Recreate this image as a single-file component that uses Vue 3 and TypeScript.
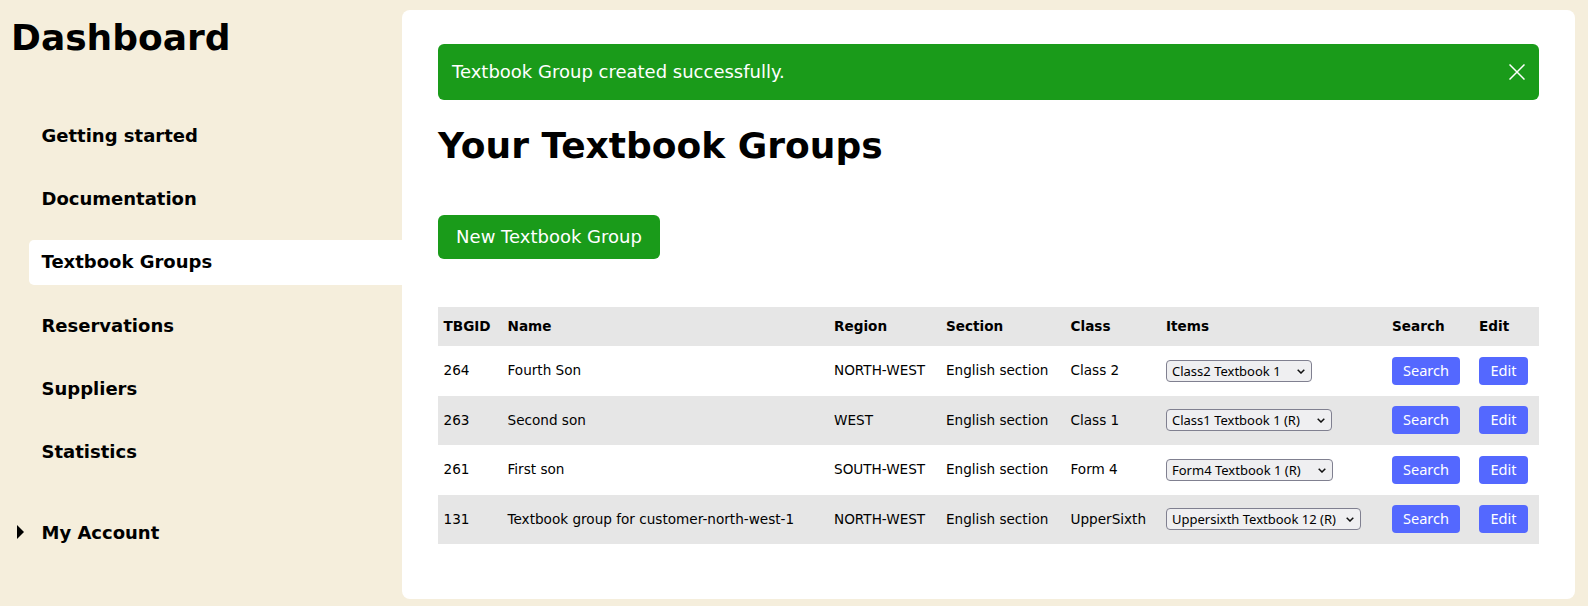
<script setup lang="ts">
interface Row { id: number; name: string; region: string; section: string; cls: string; item: string; selectWidth: number }
const rows: Row[] = [
  { id: 264, name: 'Fourth Son', region: 'NORTH-WEST', section: 'English section', cls: 'Class 2', item: 'Class2 Textbook 1', selectWidth: 146 },
  { id: 263, name: 'Second son', region: 'WEST', section: 'English section', cls: 'Class 1', item: 'Class1 Textbook 1 (R)', selectWidth: 166 },
  { id: 261, name: 'First son', region: 'SOUTH-WEST', section: 'English section', cls: 'Form 4', item: 'Form4 Textbook 1 (R)', selectWidth: 167 },
  { id: 131, name: 'Textbook group for customer-north-west-1', region: 'NORTH-WEST', section: 'English section', cls: 'UpperSixth', item: 'Uppersixth Textbook 12 (R)', selectWidth: 195 },
]
const nav = ['Getting started', 'Documentation', 'Textbook Groups', 'Reservations', 'Suppliers', 'Statistics']
</script>

<template>
  <div class="page">
    <aside class="sidebar">
      <h1 class="brand">Dashboard</h1>
      <nav class="nav">
        <a v-for="n in nav" :key="n" class="nav-item" :class="{ active: n === 'Textbook Groups' }" href="#">{{ n }}</a>
      </nav>
      <div class="account"><span class="tri"></span><span>My Account</span></div>
    </aside>
    <main class="panel">
      <div class="notice">
        <span class="notice-text">Textbook Group created successfully.</span>
        <svg class="close" width="16" height="16" viewBox="0 0 16 16" fill="none" stroke="#fff" stroke-width="1.5">
          <path d="M0.5 0.5 15.5 15.5M15.5 0.5 0.5 15.5" />
        </svg>
      </div>
      <h2 class="title">Your Textbook Groups</h2>
      <button class="new-btn">New Textbook Group</button>
      <table class="table">
        <colgroup>
          <col class="c1" /><col class="c2" /><col class="c3" /><col class="c4" />
          <col class="c5" /><col class="c6" /><col class="c7" /><col class="c8" />
        </colgroup>
        <thead>
          <tr><th>TBGID</th><th>Name</th><th>Region</th><th>Section</th><th>Class</th><th>Items</th><th>Search</th><th>Edit</th></tr>
        </thead>
        <tbody>
          <tr v-for="r in rows" :key="r.id">
            <td>{{ r.id }}</td>
            <td>{{ r.name }}</td>
            <td>{{ r.region }}</td>
            <td>{{ r.section }}</td>
            <td>{{ r.cls }}</td>
            <td class="ctrl">
              <span class="sel-wrap" :style="{ width: r.selectWidth + 'px' }">
                <select class="sel"><option>{{ r.item }}</option></select>
                <svg class="chev" width="8" height="5" viewBox="0 0 8 5" fill="none" stroke="#111" stroke-width="1.5">
                  <path d="M0.7 0.7 4 4 7.3 0.7" />
                </svg>
              </span>
            </td>
            <td class="ctrl"><button class="act search">Search</button></td>
            <td class="ctrl"><button class="act edit">Edit</button></td>
          </tr>
        </tbody>
      </table>
    </main>
  </div>
</template>

<style>
html, body { margin: 0; background: #f5eedc; }
</style>

<style scoped>
.page {
  display: flex;
  height: 606px;
  box-sizing: border-box;
  padding: 10px 13px 7px 0;
  background: #f5eedc;
  font-family: "DejaVu Sans", sans-serif;
  color: #000;
}
.sidebar { width: 402px; flex: none; display: flex; flex-direction: column; }
.brand { margin: 6px 0 0 11px; font-size: 36px; line-height: 44px; font-weight: 700; }
.nav { display: flex; flex-direction: column; gap: 18.35px; margin: 53.5px 0 0 29px; }
.nav-item {
  display: block;
  height: 45px;
  line-height: 44px;
  padding-left: 12.5px;
  font-size: 18px;
  font-weight: 700;
  color: #000;
  text-decoration: none;
  border-radius: 5px 0 0 5px;
}
.nav-item.active { background: #fff; }
.account { display: flex; align-items: center; margin: 34.75px 0 0 17px; font-size: 18px; font-weight: 700; line-height: 45px; }
.tri { width: 0; height: 0; border-left: 7px solid #000; border-top: 7px solid transparent; border-bottom: 7px solid transparent; margin-right: 17.5px; }
.panel {
  flex: 1;
  background: #fff;
  border-radius: 8px;
  padding: 34px 36px 0;
  box-sizing: border-box;
}
.notice {
  display: flex;
  align-items: center;
  justify-content: space-between;
  height: 56px;
  box-sizing: border-box;
  padding: 0 14px;
  border-radius: 6px;
  background: #1a9b1a;
  color: #fff;
  font-size: 18px;
}
.notice-text { margin-bottom: 2px; }
.title { margin: 24px 0 0; font-size: 36px; line-height: 44px; font-weight: 700; }
.new-btn {
  display: block;
  margin-top: 47px;
  height: 44px;
  width: 222px;
  padding: 0 0 2px;
  border: 0;
  border-radius: 6px;
  background: #1a9b1a;
  color: #fff;
  font: 18px "DejaVu Sans", sans-serif;
}
.table {
  margin-top: 48px;
  width: 1101px;
  table-layout: fixed;
  border-collapse: collapse;
  font-size: 13.6px;
}
.c1 { width: 64px; }
.c2 { width: 326.5px; }
.c3 { width: 112px; }
.c4 { width: 124.5px; }
.c5 { width: 95.5px; }
.c6 { width: 226px; }
.c7 { width: 87px; }
.c8 { width: 65.5px; }
.table th { box-sizing: border-box; height: 39px; padding: 0 5.5px 2px; text-align: left; font-weight: 700; background: #e6e6e6; }
.table td { box-sizing: border-box; height: 49.5px; padding: 0 5.5px 1px; white-space: nowrap; }
.table td.ctrl { padding-bottom: 0; }
.table tbody tr:nth-child(even) td { background: #e6e6e6; }
.sel-wrap { position: relative; display: block; height: 22px; }
.sel {
  display: block;
  width: 100%;
  height: 22px;
  box-sizing: border-box;
  padding: 0 0 0 5px;
  appearance: none;
  font: 13px "Noto Sans", sans-serif;
  color: #000;
  background: #efeff1;
  border: 1px solid #808090;
  border-radius: 4px;
}
.chev { position: absolute; right: 7px; top: 9px; pointer-events: none; }
.act {
  display: block;
  height: 28px;
  padding: 0 0 2px;
  border: 0;
  border-radius: 4px;
  background: #5468ff;
  color: #fff;
  font: 14.6px "Noto Sans", sans-serif;
}
.act.search { width: 68px; }
.act.edit { width: 49px; }
</style>
